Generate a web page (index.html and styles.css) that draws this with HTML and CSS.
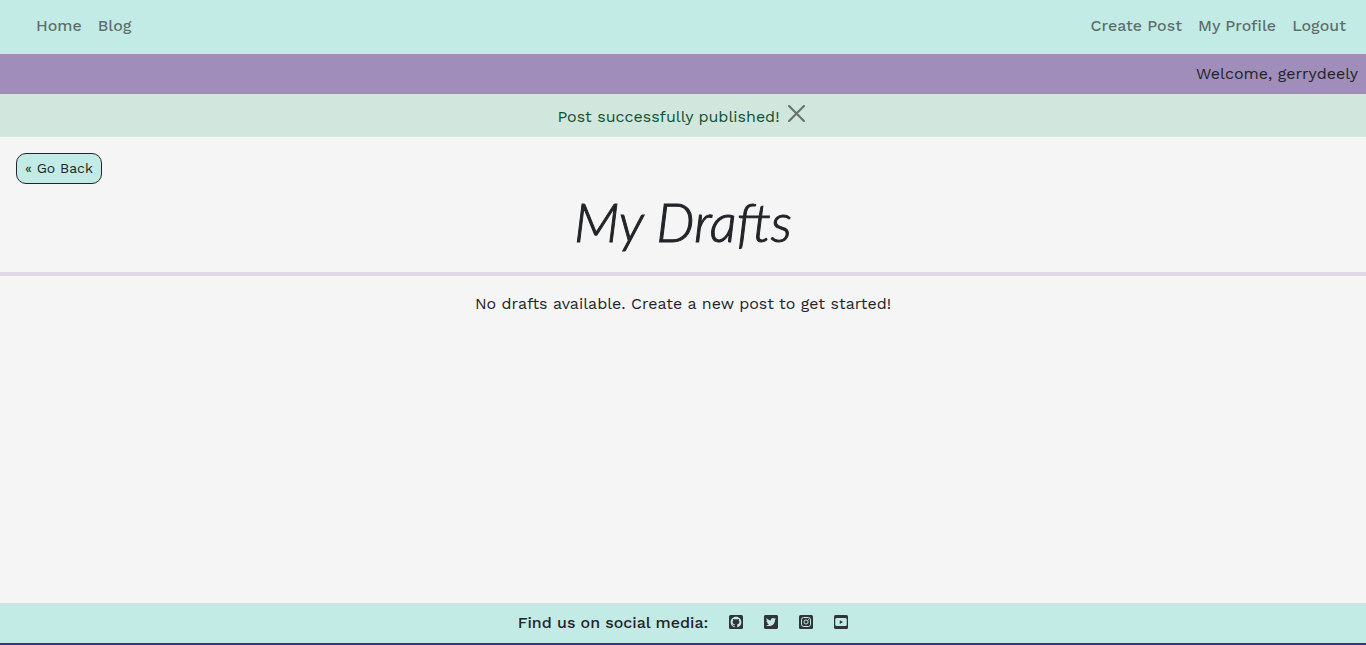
FILE: index.html
```html
<!DOCTYPE html>
<html lang="en">
<head>
<meta charset="utf-8">
<meta name="viewport" content="width=device-width, initial-scale=1">
<title>My Drafts</title>
<link rel="stylesheet" href="styles.css">
</head>
<body>
<header>
  <nav class="navbar" aria-label="Main">
    <div class="nav-group"><a href="#">Home</a><a href="#">Blog</a></div>
    <div class="nav-group"><a href="#">Create Post</a><a href="#">My Profile</a><a href="#">Logout</a></div>
  </nav>
  <div class="welcome">Welcome, gerrydeely</div>
</header>
<div class="alert" role="alert">
  <span>Post successfully published!</span>
  <button class="close" type="button" aria-label="Close">
    <svg viewBox="0 0 16 16" aria-hidden="true"><path d="M.293.293a1 1 0 0 1 1.414 0L8 6.586 14.293.293a1 1 0 1 1 1.414 1.414L9.414 8l6.293 6.293a1 1 0 0 1-1.414 1.414L8 9.414l-6.293 6.293a1 1 0 0 1-1.414-1.414L6.586 8 .293 1.707a1 1 0 0 1 0-1.414z"/></svg>
  </button>
</div>
<main>
  <button class="back" type="button">« Go Back</button>
  <h1>My Drafts</h1>
  <hr>
  <p class="empty">No drafts available. Create a new post to get started!</p>
</main>
<footer>
  <span class="social-title">Find us on social media:</span>
  <div class="social">
    <a href="#" aria-label="GitHub"><svg viewBox="0 32 448 448"><rect y="32" width="448" height="448" rx="48"/><path class="cutout" transform="translate(53 85) scale(14.25)" d="M12 .297c-6.63 0-12 5.373-12 12 0 5.303 3.438 9.8 8.205 11.385.6.113.82-.258.82-.577 0-.285-.01-1.04-.015-2.04-3.338.724-4.042-1.61-4.042-1.61C4.422 18.07 3.633 17.7 3.633 17.7c-1.087-.744.084-.729.084-.729 1.205.084 1.838 1.236 1.838 1.236 1.07 1.835 2.809 1.305 3.495.998.108-.776.417-1.305.76-1.605-2.665-.3-5.466-1.332-5.466-5.93 0-1.31.465-2.38 1.235-3.22-.135-.303-.54-1.523.105-3.176 0 0 1.005-.322 3.3 1.23.96-.267 1.98-.399 3-.405 1.02.006 2.04.138 3 .405 2.28-1.552 3.285-1.23 3.285-1.23.645 1.653.24 2.873.12 3.176.765.84 1.23 1.91 1.23 3.22 0 4.61-2.805 5.625-5.475 5.92.42.36.81 1.096.81 2.22 0 1.606-.015 2.896-.015 3.286 0 .315.21.69.825.57C20.565 22.092 24 17.592 24 12.297c0-6.627-5.373-12-12-12"/></svg></a>
    <a href="#" aria-label="Twitter"><svg viewBox="0 32 448 448"><path d="M400 32H48C21.5 32 0 53.5 0 80v352c0 26.5 21.5 48 48 48h352c26.5 0 48-21.5 48-48V80c0-26.5-21.5-48-48-48zm-48.9 158.8c.2 2.8.2 5.7.2 8.5 0 86.7-66 186.6-186.6 186.6-37.2 0-71.7-10.8-100.7-29.4 5.3.6 10.4.8 15.8.8 30.7 0 58.9-10.4 81.4-28-28.8-.6-53-19.5-61.3-45.5 10.1 1.5 19.2 1.5 29.6-1.2-30-6.1-52.5-32.5-52.5-64.4v-.8c8.7 4.9 18.9 7.9 29.6 8.3a65.447 65.447 0 0 1-29.2-54.6c0-12.2 3.2-23.4 8.9-33.1 32.3 39.8 80.8 65.8 135.2 68.6-9.3-44.5 24-80.6 64-80.6 18.9 0 35.9 7.9 47.9 20.7 14.8-2.8 29-8.3 41.6-15.8-4.9 15.2-15.2 28-28.8 36.1 13.2-1.4 26-5.1 37.8-10.2-8.9 13.1-20.1 24.7-32.9 34z"/></svg></a>
    <a href="#" aria-label="Instagram"><svg viewBox="0 32 448 448"><rect y="32" width="448" height="448" rx="48"/><rect class="outline" x="80" y="112" width="288" height="288" rx="72"/><circle class="outline" cx="224" cy="256" r="66"/><circle class="cutout" cx="304" cy="178" r="18"/></svg></a>
    <a href="#" aria-label="YouTube"><svg viewBox="0 32 448 448"><rect y="32" width="448" height="448" rx="48"/><rect class="cutout" x="40" y="128" width="368" height="256" rx="48"/><path d="M184 196l104 60-104 60z"/></svg></a>
  </div>
</footer>
</body>
</html>
```
FILE: styles.css
```css
* { box-sizing: border-box; }

body {
  display: flex;
  flex-direction: column;
  min-height: 100vh;
  margin: 0;
  background: #f5f5f5;
  border-bottom: 2px solid #412d94;
  color: #212529;
  font-family: "Work Sans", Inter, "Noto Sans", sans-serif;
  font-size: 16px;
  font-weight: 400;
  line-height: 24px;
}

.navbar {
  display: flex;
  justify-content: space-between;
  padding: 14px 20px 16px 36px;
  background: #c3ebe5;
}

.nav-group {
  display: flex;
  gap: 16px;
}

.nav-group a {
  color: rgba(0, 0, 0, 0.55);
  font-weight: 500;
  text-decoration: none;
}

.welcome {
  padding: 8px;
  background: #a08db9;
  text-align: right;
}

.alert {
  display: flex;
  justify-content: center;
  gap: 8px;
  padding: 11px 12px 8px 8px;
  background: #d1e7dd;
  color: #0f5132;
}

.close {
  align-self: flex-start;
  padding: 0;
  border: 0;
  background: none;
  color: #000;
  opacity: 0.5;
}

.close svg {
  display: block;
  width: 17px;
  height: 17px;
  fill: currentColor;
}

main { flex: 1; }

.back {
  display: block;
  margin: 16px 16px 0;
  padding: 4px 8px;
  border: 1px solid #212529;
  border-radius: 10px;
  background: #c3ebe5;
  color: #212529;
  font: inherit;
  font-size: 14px;
  line-height: 21px;
}

h1 {
  margin: 4px 0 16px;
  font-family: Lato, sans-serif;
  font-size: 54px;
  font-style: italic;
  font-weight: 300;
  line-height: 68px;
  text-align: center;
  -webkit-text-stroke: 1px currentColor;
}

hr {
  height: 4px;
  margin: 0;
  border: 0;
  background: #dfd9e6;
}

.empty {
  margin: 16px 0;
  text-align: center;
}

footer {
  display: flex;
  align-items: flex-start;
  justify-content: center;
  gap: 21px;
  padding: 8px;
  background: #c3ebe5;
}

.social-title { font-weight: 500; }

.social {
  display: flex;
  gap: 21px;
  padding-top: 4px;
}

.social svg {
  display: block;
  width: 14px;
  height: 14px;
  fill: #303638;
}

.social .cutout { fill: #c3ebe5; }

.social .outline {
  fill: none;
  stroke: #c3ebe5;
  stroke-width: 32px;
}
```
